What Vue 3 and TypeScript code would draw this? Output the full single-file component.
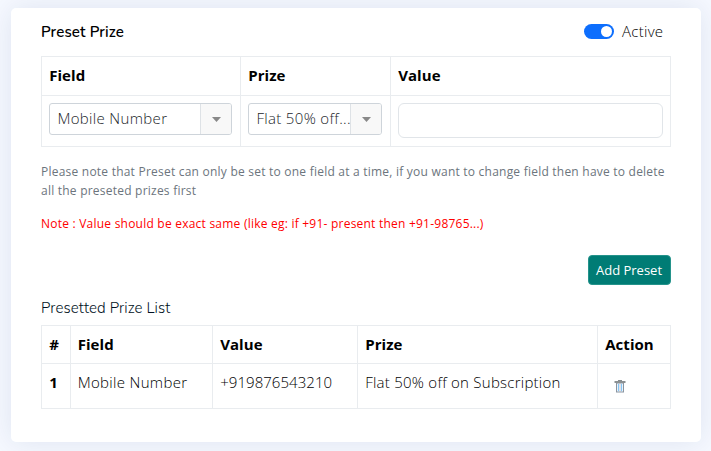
<script setup lang="ts">
import { ref } from 'vue'

interface Preset {
  field: string
  value: string
  prize: string
}

const active = ref(true)
const value = ref('')
const presets = ref<Preset[]>([
  { field: 'Mobile Number', value: '+919876543210', prize: 'Flat 50% off on Subscription' },
])

function remove(index: number): void {
  presets.value.splice(index, 1)
}
</script>

<template>
  <main class="page">
    <section class="card">
      <header class="head">
        <h5 class="title">Preset Prize</h5>
        <label class="switch" @click="active = !active">
          <span class="track" :class="{ on: active }"><span class="knob"></span></span>
          <span class="switch-text">Active</span>
        </label>
      </header>

      <div class="table form">
        <div class="cell th">Field</div>
        <div class="cell th">Prize</div>
        <div class="cell th">Value</div>
        <div class="cell">
          <div class="select">
            <span class="choice">Mobile Number</span>
            <span class="arrow"><svg width="9" height="5" viewBox="0 0 9 5"><path d="M0 0h9L4.5 5z" fill="#888" /></svg></span>
          </div>
        </div>
        <div class="cell">
          <div class="select">
            <span class="choice">Flat 50% off...</span>
            <span class="arrow"><svg width="9" height="5" viewBox="0 0 9 5"><path d="M0 0h9L4.5 5z" fill="#888" /></svg></span>
          </div>
        </div>
        <div class="cell"><input v-model="value" class="input" type="text" /></div>
      </div>

      <p class="hint">Please note that Preset can only be set to one field at a time, if you want to change field then have to delete<br />all the preseted prizes first</p>
      <p class="warn">Note : Value should be exact same (like eg: if +91- present then +91-98765...)</p>

      <div class="actions"><button class="add" type="button">Add Preset</button></div>

      <h6 class="subtitle">Presetted Prize List</h6>
      <div class="table list">
        <div class="cell th">#</div>
        <div class="cell th">Field</div>
        <div class="cell th">Value</div>
        <div class="cell th">Prize</div>
        <div class="cell th">Action</div>
        <template v-for="(p, i) in presets" :key="p.value">
          <div class="cell th">{{ i + 1 }}</div>
          <div class="cell">{{ p.field }}</div>
          <div class="cell num">{{ p.value }}</div>
          <div class="cell offer">{{ p.prize }}</div>
          <div class="cell">
            <button class="trash" type="button" @click="remove(i)">
              <svg width="12" height="13" viewBox="0 0 12 13">
                <path d="M2 3h8v9.500H2z" fill="#8a94a0" />
                <path d="M3 3.500h6v8H3z" fill="#e8f2fb" />
                <path d="M4.500 4v7M7.500 4v7" stroke="#84c6f6" />
                <path d="M6 4v7" stroke="#e0c4bc" stroke-width=".7" />
                <path d="M.5 1h11v2H.5z" fill="#8b9092" />
                <path d="M4 0h4v1H4z" fill="#858b8e" />
              </svg>
            </button>
          </div>
        </template>
      </div>
    </section>
  </main>
</template>

<style>
body {
  background: #f6f9ff;
}
</style>

<style scoped>
.page,
.page * {
  box-sizing: border-box;
}
.page {
  height: 451px;
  padding: 8px 10px 9px 11px;
  overflow: hidden;
  font-family: 'Open Sans', sans-serif;
  font-size: 15px;
  line-height: 22px;
  color: #212529;
}
.card {
  height: 434px;
  padding: 12px 30px 0;
  border-radius: 5px;
  background: #fff;
  box-shadow: 0 0 30px rgba(1, 41, 112, 0.1);
}
.head {
  display: flex;
  justify-content: space-between;
  height: 36px;
  padding-right: 7px;
}
.title,
.subtitle {
  margin: 0;
  font-family: Nunito, 'Open Sans', sans-serif;
}
.title {
  font-size: 15px;
  letter-spacing: 0.13px;
  font-weight: 600;
  line-height: 24px;
  color: #000;
}
.switch {
  display: flex;
  align-items: center;
  gap: 8px;
  height: 23px;
  font-weight: 300;
  letter-spacing: 0.28px;
  color: #000;
}
.switch-text {
  width: 42px;
  padding-bottom: 2px;
}
.track {
  display: flex;
  width: 30px;
  height: 15px;
  padding: 2px;
  border-radius: 8px;
  background: #adb5bd;
}
.track.on {
  justify-content: flex-end;
  background: #0d6efd;
}
.knob {
  width: 11px;
  height: 11px;
  border-radius: 50%;
  background: #fff;
}
.table {
  display: grid;
  width: 630px;
  border-top: 1px solid #e9ecef;
  border-left: 1px solid #e9ecef;
}
.form {
  grid-template-columns: 199px 150px 280px;
  grid-template-rows: 39px 51px;
}
.list {
  grid-template-columns: 28.500px 142.500px 145px 240px 73px;
  grid-template-rows: 38px 45px;
}
.cell {
  padding: 7px 7px 7px 7.200px;
  border-right: 1px solid #e9ecef;
  border-bottom: 1px solid #e9ecef;
  font-weight: 300;
  letter-spacing: 0.32px;
  color: #000;
}
.th {
  font-weight: 700;
  letter-spacing: 0.05px;
}
.num {
  letter-spacing: 0.05px;
}
.offer {
  letter-spacing: 0.25px;
}
.select {
  display: flex;
  width: calc(100% - 1px);
  height: 32px;
  border: 1px solid #ced4da;
  border-radius: 3px;
  overflow: hidden;
}
.choice {
  flex: 1;
  min-width: 0;
  padding-left: 7.200px;
  line-height: 29px;
  letter-spacing: 0.34px;
  white-space: nowrap;
  color: #212529;
}
.arrow {
  display: flex;
  align-items: center;
  justify-content: center;
  width: 31px;
  border-left: 1px solid #dee2e6;
  background: #f8f8f8;
}
.input {
  display: block;
  width: 100%;
  height: 35px;
  border: 1px solid #e1e5e9;
  border-radius: 6px;
  outline: none;
}
.hint,
.warn {
  margin: 0;
  font-size: 12px;
  letter-spacing: 0.225px;
  line-height: 19px;
  white-space: nowrap;
}
.hint {
  margin-top: 15px;
  color: #6c757d;
}
.warn {
  margin-top: 14px;
  color: #f00;
}
.actions {
  display: flex;
  justify-content: flex-end;
  margin-top: 22px;
}
.add {
  width: 83px;
  height: 30px;
  padding: 0 1px 0 0;
  border: 1px solid #24938b;
  border-radius: 4px;
  background: #007c75;
  color: #fff;
  font: 400 13px 'Open Sans', sans-serif;
}
.subtitle {
  margin-top: 12px;
  font-size: 15px;
  letter-spacing: 0.12px;
  font-weight: 300;
  line-height: 22px;
  height: 28px;
  color: #012;
}
.trash {
  display: block;
  margin: 9px 0 0 9px;
  padding: 0;
  border: 0;
  background: none;
  line-height: 0;
}
</style>
